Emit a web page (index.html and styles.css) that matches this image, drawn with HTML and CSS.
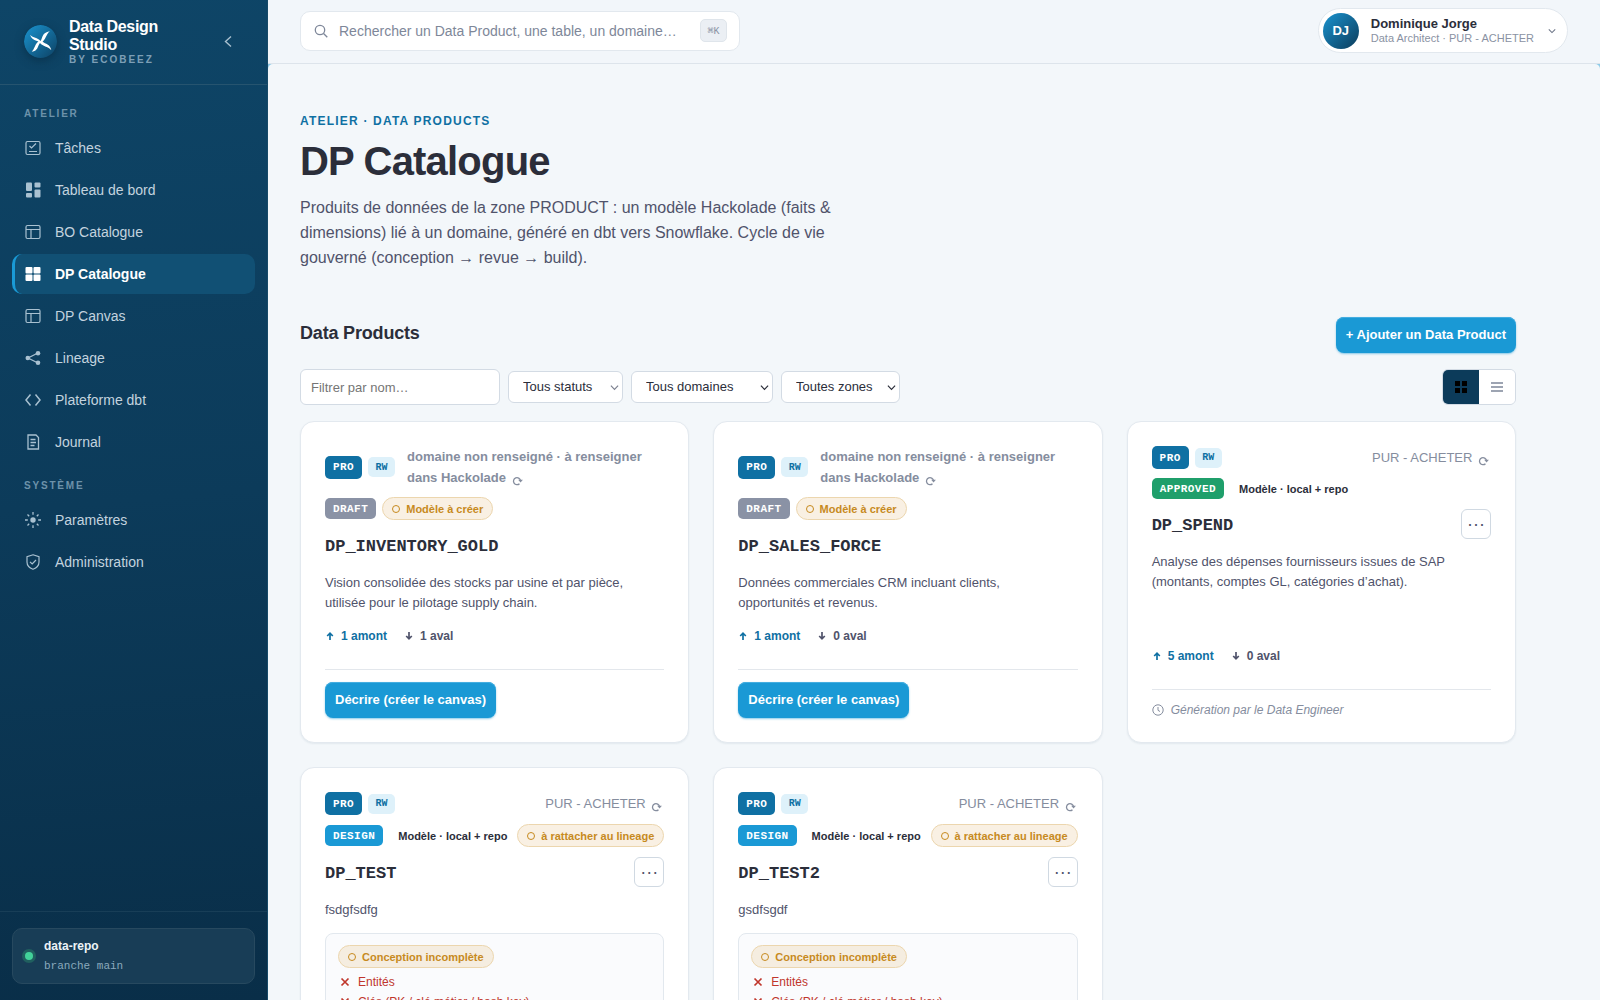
FILE: index.html
```html
<!DOCTYPE html>
<html lang="fr">
<head>
<meta charset="utf-8">
<meta name="viewport" content="width=device-width, initial-scale=1">
<title>DP Catalogue – Data Design Studio</title>
<link rel="stylesheet" href="styles.css">
</head>
<body>
<svg class="sprite" aria-hidden="true">
  <symbol id="i-table" viewBox="0 0 16 16"><rect x="1" y="1.5" width="14" height="13" rx="1.5" fill="none" stroke="currentColor" stroke-width="1.2"/><path d="M1 5.5h14M6 5.5v9" fill="none" stroke="currentColor" stroke-width="1.2"/></symbol>
  <symbol id="i-refresh" viewBox="0 0 10 10"><path d="M6.800 7.900A3.200 3.200 0 1 1 7.700 5" fill="none" stroke="currentColor" stroke-width="1.2"/><path d="M5.600 4.400h4.300L7.800 6.800z" fill="currentColor"/></symbol>
  <symbol id="i-up" viewBox="0 0 10 10"><path d="M5 9V2.5M2.2 5L5 2.2 7.8 5" fill="none" stroke="currentColor" stroke-width="1.7"/></symbol>
  <symbol id="i-down" viewBox="0 0 10 10"><path d="M5 1v6.5M2.2 5L5 7.8 7.8 5" fill="none" stroke="currentColor" stroke-width="1.7"/></symbol>
  <symbol id="i-cross" viewBox="0 0 10 10"><path d="M1.5 1.5l7 7M8.5 1.5l-7 7" stroke="currentColor" stroke-width="1.7"/></symbol>
  <symbol id="i-chevron" viewBox="0 0 10 10"><path d="M1 3l4 4 4-4" fill="none" stroke="currentColor" stroke-width="1.3"/></symbol>
</svg>
<div class="app">
  <aside class="sidebar">
    <div class="brand">
      <svg class="brand-logo" viewBox="0 0 32 32" aria-hidden="true">
        <defs><linearGradient id="lg" x1="0" y1="0" x2="1" y2="1"><stop offset="0" stop-color="#1a94d0"/><stop offset="1" stop-color="#0d4163"/></linearGradient></defs>
        <circle cx="16" cy="16" r="16" fill="url(#lg)"/>
        <path d="M6 9.5C9 13 13 12 16 15.500C18.500 12 17 7.500 25 6C21 9.500 21.500 13.500 18 16C21 19 25 18 26.500 24.500C22.500 20.500 18.500 21 15.500 17.500C13 20.500 14 25 7.500 26C10.500 23 10.500 18.500 14 16C10.500 14.500 7 14 6 9.500z" fill="#fff"/>
      </svg>
      <div class="brand-text">
        <div class="brand-name">Data Design Studio</div>
        <div class="brand-sub">BY ECOBEEZ</div>
      </div>
      <button class="collapse" type="button" aria-label="Réduire le menu"><svg viewBox="0 0 8 12" aria-hidden="true"><path d="M7 1L1.500 6 7 11" fill="none" stroke="currentColor" stroke-width="1.4"/></svg></button>
    </div>
    <nav class="nav">
      <div class="nav-label">ATELIER</div>
      <a class="nav-item" href="#"><svg viewBox="0 0 16 16" aria-hidden="true"><rect x="1" y="1.500" width="14" height="13" rx="1.500" fill="none" stroke="currentColor" stroke-width="1.200"/><path d="M4.500 6l2 2L11 3.500M4 11.500h8" fill="none" stroke="currentColor" stroke-width="1.200"/></svg>Tâches</a>
      <a class="nav-item" href="#"><svg viewBox="0 0 16 16" aria-hidden="true" fill="currentColor"><rect x="1" y="0.500" width="6" height="8.500" rx="1"/><rect x="9.500" y="0.500" width="6" height="5" rx="1"/><rect x="1" y="11" width="6" height="4.500" rx="1"/><rect x="9.500" y="7.500" width="6" height="8" rx="1"/></svg>Tableau de bord</a>
      <a class="nav-item" href="#"><svg aria-hidden="true"><use href="#i-table"/></svg>BO Catalogue</a>
      <a class="nav-item active" href="#" aria-current="page"><svg viewBox="0 0 16 16" aria-hidden="true" fill="currentColor"><rect x="0.500" y="1" width="7" height="6.500" rx="1"/><rect x="8.500" y="1" width="7" height="6.500" rx="1"/><rect x="0.500" y="8.500" width="7" height="6.500" rx="1"/><rect x="8.500" y="8.500" width="7" height="6.500" rx="1"/></svg>DP Catalogue</a>
      <a class="nav-item" href="#"><svg aria-hidden="true"><use href="#i-table"/></svg>DP Canvas</a>
      <a class="nav-item" href="#"><svg viewBox="0 0 16 16" aria-hidden="true"><path d="M13 3L3 8l10 5" fill="none" stroke="currentColor" stroke-width="1.300"/><g fill="currentColor"><circle cx="13" cy="3.200" r="2.300"/><circle cx="2.800" cy="8" r="2.300"/><circle cx="13" cy="12.800" r="2.300"/></g></svg>Lineage</a>
      <a class="nav-item" href="#"><svg viewBox="0 0 16 16" aria-hidden="true"><path d="M5.500 2.500L1 8l4.500 5.500M10.500 2.500L15 8l-4.500 5.500" fill="none" stroke="currentColor" stroke-width="1.500"/></svg>Plateforme dbt</a>
      <a class="nav-item" href="#"><svg viewBox="0 0 16 16" aria-hidden="true"><path d="M3 1h8l2.500 2.500V15H3zM5.500 5.500h5M5.500 8.500h5.500M5.500 11.500h4" fill="none" stroke="currentColor" stroke-width="1.300"/></svg>Journal</a>
      <div class="nav-label">SYSTÈME</div>
      <a class="nav-item" href="#"><svg viewBox="0 0 16 16" aria-hidden="true"><circle cx="8" cy="8" r="2.700" fill="currentColor"/><path d="M8 0v2.800M8 13.200V16M0 8h2.800M13.200 8H16M2.500 2.500l1.700 1.700M11.800 11.800l1.700 1.700M13.500 2.500l-1.700 1.700M4.200 11.800l-1.700 1.700" stroke="currentColor" stroke-width="1.300"/></svg>Paramètres</a>
      <a class="nav-item" href="#"><svg viewBox="0 0 16 16" aria-hidden="true"><path d="M8 .8l6 2V8c0 3.500-2.500 6-6 7.300C4.500 14 2 11.500 2 8V2.800zM5 7.800l2.200 2.200L11 6" fill="none" stroke="currentColor" stroke-width="1.200"/></svg>Administration</a>
    </nav>
    <div class="sidebar-foot">
      <div class="repo">
        <span class="repo-dot"></span>
        <div><div class="repo-name">data-repo</div><div class="repo-branch">branche main</div></div>
      </div>
    </div>
  </aside>

  <div class="shell">
    <header class="topbar">
      <label class="search">
        <svg viewBox="0 0 14 14" aria-hidden="true"><circle cx="6" cy="6" r="4.700" fill="none" stroke="currentColor" stroke-width="1.300"/><path d="M9.500 9.500l3.800 3.800" stroke="currentColor" stroke-width="1.300"/></svg>
        <input type="search" aria-label="Rechercher" placeholder="Rechercher un Data Product, une table, un domaine…">
        <kbd>⌘K</kbd>
      </label>
      <button class="user" type="button">
        <span class="avatar">DJ</span>
        <span class="user-text"><span class="user-name">Dominique Jorge</span><span class="user-role">Data Architect · PUR - ACHETER</span></span>
        <svg aria-hidden="true"><use href="#i-chevron"/></svg>
      </button>
    </header>
    <main class="main">
      <div class="content">
        <div class="eyebrow">ATELIER · DATA PRODUCTS</div>
        <h1>DP Catalogue</h1>
        <p class="lead">Produits de données de la zone PRODUCT : un modèle Hackolade (faits &amp; dimensions) lié à un domaine, généré en dbt vers Snowflake. Cycle de vie gouverné (conception → revue → build).</p>
        <div class="section-head">
          <h2>Data Products</h2>
          <button class="btn" type="button">+ Ajouter un Data Product</button>
        </div>
        <div class="filters">
          <input class="filter-name" type="text" aria-label="Filtrer par nom" placeholder="Filtrer par nom…">
          <span class="select muted"><select class="s-status" aria-label="Statut"><option>Tous statuts</option></select><svg aria-hidden="true"><use href="#i-chevron"/></svg></span>
          <span class="select"><select class="s-domain" aria-label="Domaine"><option>Tous domaines</option></select><svg aria-hidden="true"><use href="#i-chevron"/></svg></span>
          <span class="select"><select class="s-zone" aria-label="Zone"><option>Toutes zones</option></select><svg aria-hidden="true"><use href="#i-chevron"/></svg></span>
          <div class="views">
            <button class="on" type="button" aria-label="Grille"><svg viewBox="0 0 12 12" aria-hidden="true"><path d="M0 0h5v5H0zM7 0h5v5H7zM0 7h5v5H0zM7 7h5v5H7z" fill="#000"/></svg></button>
            <button type="button" aria-label="Liste"><svg viewBox="0 0 12 12" aria-hidden="true"><path d="M0 2h12M0 6h12M0 10h12" stroke="currentColor" stroke-width="1.300"/></svg></button>
          </div>
        </div>
        <div class="grid">
          <article class="card">
            <div class="row"><span class="tag pro">PRO</span><span class="tag rw">RW</span><span class="domain unset">domaine non renseigné · à renseigner dans Hackolade <svg aria-hidden="true"><use href="#i-refresh"/></svg></span></div>
            <div class="row"><span class="tag status draft">DRAFT</span><span class="pill">Modèle à créer</span></div>
            <div class="title"><h3>DP_INVENTORY_GOLD</h3></div>
            <p class="desc">Vision consolidée des stocks par usine et par pièce, utilisée pour le pilotage supply chain.</p>
            <div class="links"><span class="up"><svg aria-hidden="true"><use href="#i-up"/></svg>1 amont</span><span><svg aria-hidden="true"><use href="#i-down"/></svg>1 aval</span></div>
            <div class="foot"><button class="btn" type="button">Décrire (créer le canvas)</button></div>
          </article>
          <article class="card">
            <div class="row"><span class="tag pro">PRO</span><span class="tag rw">RW</span><span class="domain unset">domaine non renseigné · à renseigner dans Hackolade <svg aria-hidden="true"><use href="#i-refresh"/></svg></span></div>
            <div class="row"><span class="tag status draft">DRAFT</span><span class="pill">Modèle à créer</span></div>
            <div class="title"><h3>DP_SALES_FORCE</h3></div>
            <p class="desc">Données commerciales CRM incluant clients, opportunités et revenus.</p>
            <div class="links"><span class="up"><svg aria-hidden="true"><use href="#i-up"/></svg>1 amont</span><span><svg aria-hidden="true"><use href="#i-down"/></svg>0 aval</span></div>
            <div class="foot"><button class="btn" type="button">Décrire (créer le canvas)</button></div>
          </article>
          <article class="card">
            <div class="row"><span class="tag pro">PRO</span><span class="tag rw">RW</span><span class="domain">PUR - ACHETER <svg aria-hidden="true"><use href="#i-refresh"/></svg></span></div>
            <div class="row"><span class="tag status approved">APPROVED</span><span class="model">Modèle · local + repo</span></div>
            <div class="title"><h3>DP_SPEND</h3><button class="more" type="button" aria-label="Plus d’actions">···</button></div>
            <p class="desc">Analyse des dépenses fournisseurs issues de SAP (montants, comptes GL, catégories d’achat).</p>
            <div class="links"><span class="up"><svg aria-hidden="true"><use href="#i-up"/></svg>5 amont</span><span><svg aria-hidden="true"><use href="#i-down"/></svg>0 aval</span></div>
            <div class="foot note"><svg viewBox="0 0 12 12" aria-hidden="true"><circle cx="6" cy="6" r="5.200" fill="none" stroke="currentColor"/><path d="M6 3v3.300l2 1.200" fill="none" stroke="currentColor"/></svg>Génération par le Data Engineer</div>
          </article>
          <article class="card">
            <div class="row"><span class="tag pro">PRO</span><span class="tag rw">RW</span><span class="domain">PUR - ACHETER <svg aria-hidden="true"><use href="#i-refresh"/></svg></span></div>
            <div class="row"><span class="tag status design">DESIGN</span><span class="model">Modèle · local + repo</span><span class="pill">à rattacher au lineage</span></div>
            <div class="title"><h3>DP_TEST</h3><button class="more" type="button" aria-label="Plus d’actions">···</button></div>
            <p class="desc">fsdgfsdfg</p>
            <div class="checks">
              <span class="pill">Conception incomplète</span>
              <ul><li><svg aria-hidden="true"><use href="#i-cross"/></svg>Entités</li><li><svg aria-hidden="true"><use href="#i-cross"/></svg>Clés (PK / clé métier / hash key)</li></ul>
            </div>
          </article>
          <article class="card">
            <div class="row"><span class="tag pro">PRO</span><span class="tag rw">RW</span><span class="domain">PUR - ACHETER <svg aria-hidden="true"><use href="#i-refresh"/></svg></span></div>
            <div class="row"><span class="tag status design">DESIGN</span><span class="model">Modèle · local + repo</span><span class="pill">à rattacher au lineage</span></div>
            <div class="title"><h3>DP_TEST2</h3><button class="more" type="button" aria-label="Plus d’actions">···</button></div>
            <p class="desc">gsdfsgdf</p>
            <div class="checks">
              <span class="pill">Conception incomplète</span>
              <ul><li><svg aria-hidden="true"><use href="#i-cross"/></svg>Entités</li><li><svg aria-hidden="true"><use href="#i-cross"/></svg>Clés (PK / clé métier / hash key)</li></ul>
            </div>
          </article>
        </div>
      </div>
    </main>
  </div>
</div>
</body>
</html>
```
FILE: styles.css
```css
*, *::before { box-sizing: border-box; }
body {
  margin: 0;
  font: 14px/20px "Liberation Sans", Arial, sans-serif;
  color: #2b2e3a;
  background: #f3f7fa;
}
h1, h2, h3, p, ul { margin: 0; padding: 0; }
button, input, select { font: inherit; color: inherit; }
button { cursor: pointer; }
svg { flex: none; }
.sprite { display: none; }

.app { display: flex; height: 100vh; overflow: hidden; }

/* Sidebar */
.sidebar {
  width: 268px;
  flex: none;
  display: flex;
  flex-direction: column;
  border-right: 1px solid #174a68;
  background: linear-gradient(175deg, #0e4567, #0c3b5a 50%, #092e48);
  color: #c3d3df;
}
.brand {
  height: 85px;
  padding: 0 31px 2px 24px;
  display: flex;
  align-items: center;
  gap: 12px;
  border-bottom: 1px solid #26546f;
}
.brand-logo { width: 33px; height: 33px; border-radius: 50%; box-shadow: 0 3px 8px #06253a80; }
.brand-text { flex: 1; }
.brand-name { width: 110px; color: #fff; font-size: 16px; font-weight: 700; line-height: 18px; letter-spacing: -0.02em; }
.brand-sub { color: #7d9fb6; font-size: 10px; font-weight: 700; line-height: 11px; letter-spacing: 0.2em; }
.collapse { border: 0; padding: 4px; background: none; color: #a9c0cf; display: flex; }
.collapse svg { width: 8px; height: 13px; }
.nav { flex: 1; padding: 19px 12px; display: flex; flex-direction: column; gap: 2px; }
.nav-label { padding: 0 12px; height: 22px; color: #6d92aa; font-size: 10px; font-weight: 700; letter-spacing: 0.18em; }
.nav-item + .nav-label { margin-top: 12px; }
.nav-item {
  height: 40px;
  padding: 0 12px 0 10px;
  display: flex;
  align-items: center;
  gap: 14px;
  border-left: 3px solid transparent;
  border-radius: 10px;
  color: #c3d3df;
  text-decoration: none;
  font-size: 14px;
}
.nav-item svg { width: 16px; height: 16px; color: #a9c1d1; }
.nav-item.active { background: #115074; border-left-color: #1a9ad6; color: #fff; font-weight: 700; }
.nav-item.active svg { color: #fff; }
.sidebar-foot { padding: 16px 12px; border-top: 1px solid #183e57; }
.repo {
  height: 56px;
  padding: 0 12px;
  display: flex;
  align-items: center;
  gap: 11px;
  border: 1px solid #27495f;
  border-radius: 10px;
  background: #183d56;
}
.repo-dot { width: 8px; height: 8px; border-radius: 50%; background: #42d29a; box-shadow: 0 0 0 3px #20605f; }
.repo-name { color: #edf3f7; font-size: 12px; font-weight: 700; }
.repo-branch { color: #8aaabd; font: 11px/20px "Liberation Mono", monospace; }

/* Top bar */
.shell { flex: 1; min-width: 0; display: flex; flex-direction: column; background: #8ecbe8; }
.topbar {
  height: 64px;
  flex: none;
  padding: 0 32px 2px;
  display: flex;
  align-items: center;
  justify-content: space-between;
  background: #f2f6fa;
  border-bottom: 1px solid #dde4eb;
}
.search {
  width: 440px;
  height: 40px;
  padding: 0 12px 0 13px;
  display: flex;
  align-items: center;
  border: 1px solid #e2e8ee;
  border-radius: 10px;
  background: #fff;
  color: #7e8799;
}
.search svg { width: 14px; height: 14px; margin-right: 11px; }
.search input { flex: 1; min-width: 0; padding: 0; border: 0; outline: 0; background: none; font-size: 14px; }
.search input::placeholder { color: #7e8799; }
kbd {
  width: 27px;
  height: 23px;
  display: grid;
  place-items: center;
  border: 1px solid #dfe5eb;
  border-radius: 5px;
  background: #ebeff4;
  color: #8a92a3;
  font: 10px "Liberation Mono", "DejaVu Sans Mono", monospace;
}
.user {
  height: 45px;
  padding: 0 11px 0 4px;
  display: flex;
  align-items: center;
  gap: 12px;
  border: 1px solid #e2e8ee;
  border-radius: 23px;
  background: #fff;
  text-align: left;
}
.avatar {
  width: 36px;
  height: 36px;
  display: grid;
  place-items: center;
  border-radius: 50%;
  background: linear-gradient(135deg, #1a94d0, #0c3b5a);
  color: #fff;
  font-size: 13px;
  font-weight: 700;
}
.user-text { display: flex; flex-direction: column; line-height: 15px; }
.user-name { font-size: 13px; font-weight: 700; }
.user-role { color: #8a92a3; font-size: 11px; }
.user svg { width: 8px; height: 8px; margin-left: 2px; color: #6b7486; }

/* Page */
.main { flex: 1; min-height: 0; overflow: hidden; background: #f3f7fa; border-radius: 5px 5px 0 0; }
.content { max-width: 1280px; padding: 47px 32px; }
.eyebrow { color: #0f70a3; font-size: 12px; font-weight: 700; letter-spacing: 0.1em; }
h1 { margin-top: 8px; font-size: 40px; line-height: 44px; letter-spacing: -0.02em; }
.lead { max-width: 560px; margin-top: 12px; color: #50536b; font-size: 16px; line-height: 25px; }
.section-head { margin-top: 47px; height: 36px; display: flex; align-items: center; justify-content: space-between; }
h2 { padding-bottom: 4px; font-size: 18px; line-height: 24px; letter-spacing: -0.01em; }
.btn {
  height: 36px;
  padding: 0 10px;
  border: 0;
  border-radius: 8px;
  background: #1a99d5;
  box-shadow: inset 0 1px 0 #44ade0, 0 1px 2px #1a99d580;
  color: #fff;
  font-size: 13px;
  font-weight: 700;
}
.filters { margin-top: 16px; display: flex; align-items: center; gap: 8px; font-size: 13px; }
.filter-name { width: 200px; height: 36px; padding: 0 10px; border: 1px solid #d3dbe4; border-radius: 6px; background: #fff; }
.filter-name::placeholder { color: #757575; }
.select { display: grid; align-items: center; }
.select select, .select svg { grid-area: 1 / 1; }
.select select { appearance: none; height: 32px; padding: 0 14px; border: 1px solid #d3dbe4; border-radius: 6px; background: #fff; }
.select svg { justify-self: end; width: 9px; height: 9px; margin-right: 4px; pointer-events: none; }
.select.muted svg { color: #7c8190; }
.s-status { width: 115px; }
.s-domain { width: 142px; }
.s-zone { width: 119px; }
.views { margin-left: auto; display: flex; border: 1px solid #d3dbe4; border-radius: 6px; overflow: hidden; }
.views button { width: 36px; height: 34px; padding: 0; display: grid; place-items: center; border: 0; background: #fff; color: #7e8799; }
.views .on { background: #0c3b5a; }
.views svg { width: 12px; height: 12px; }

/* Cards */
.grid { margin-top: 16px; display: grid; grid-template-columns: repeat(3, 1fr); gap: 24px; }
.card {
  padding: 24px;
  display: flex;
  flex-direction: column;
  border: 1px solid #e3e9ef;
  border-radius: 14px;
  background: #fff;
  box-shadow: 0 1px 2px #0c3b5a12;
}
.row { display: flex; align-items: center; gap: 6px; margin-bottom: 9px; }
.tag { flex: none; display: grid; place-items: center; border-radius: 5px; font: 700 11px "Liberation Mono", monospace; color: #fff; }
.pro { width: 37px; height: 23px; background: #0f70a3; letter-spacing: 0.04em; }
.rw { width: 27px; height: 20px; background: #def1fa; color: #0f70a3; font-size: 10px; }
.status { height: 21px; padding: 0 8px; letter-spacing: 0.04em; }
.draft { background: #8a92a5; }
.approved { background: #1f9f6b; }
.design { background: #1a99d5; }
.domain { margin-left: auto; padding-right: 2px; color: #858d9e; font-size: 13px; line-height: 21px; }
.domain.unset { flex: 1; margin-left: 6px; padding: 0; font-weight: 700; }
.domain svg { width: 11px; height: 11px; margin-left: 2px; vertical-align: -4px; }
.pill {
  height: 23px;
  padding: 0 9px;
  display: inline-flex;
  align-items: center;
  gap: 6px;
  border: 1px solid #ecd6ae;
  border-radius: 12px;
  background: #f9f0e3;
  color: #c78a1e;
  font-size: 11px;
  font-weight: 700;
  white-space: nowrap;
}
.pill::before { content: ""; width: 8px; height: 8px; border: 1px solid; border-radius: 50%; }
.model { margin-left: 9px; font-size: 11px; font-weight: 700; white-space: nowrap; }
.model + .pill { margin-left: auto; }
.title { min-height: 30px; margin-top: 1px; display: flex; align-items: flex-end; justify-content: space-between; }
h3 { font: 700 17px/26px "Liberation Mono", monospace; }
.more { width: 30px; height: 30px; padding: 0; border: 1px solid #d0d9e2; border-radius: 6px; background: #fff; color: #50536b; font-size: 18px; line-height: 24px; }
.desc { margin: 13px 0; padding-right: 8px; color: #50536b; font-size: 13px; }
.links { margin: auto 0 23px; display: flex; gap: 17px; color: #50536b; font-size: 12px; font-weight: 700; }
.links span { display: flex; align-items: center; gap: 6px; }
.links svg { width: 10px; height: 10px; }
.links .up { color: #0f70a3; }
.foot { padding-top: 12px; border-top: 1px solid #e3e7ec; }
.note { display: flex; align-items: center; gap: 7px; color: #858d9e; font-size: 12px; font-style: italic; line-height: 16px; }
.note svg { width: 12px; height: 12px; }
.checks { padding: 11px 12px; border: 1px solid #e2e8ee; border-radius: 8px; background: #fafbfd; color: #c0362c; font-size: 12px; }
.checks .pill { background: #f5ede0; }
.checks ul { margin-top: 4px; list-style: none; }
.checks li { display: flex; align-items: center; gap: 8px; padding-left: 2px; line-height: 20px; }
.checks li svg { width: 10px; height: 10px; }
```
